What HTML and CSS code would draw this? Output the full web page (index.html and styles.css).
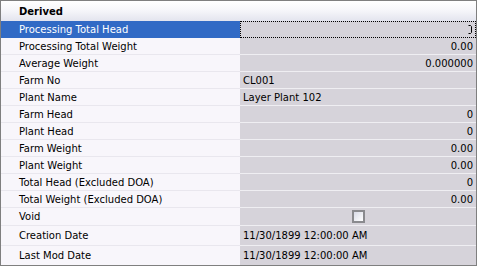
FILE: index.html
```html
<!DOCTYPE html>
<html lang="en">
<head>
<meta charset="UTF-8">
<title>Derived</title>
<link rel="stylesheet" href="styles.css">
</head>
<body>

<div class="grid">
    <div class="head">Derived</div>

    <div class="row selected">
        <div class="label">Processing Total Head</div>
        <div class="value num focus">
            <svg width="5" height="11" viewBox="0 0 5 11"><path d="M0.5 1.5 H2.5 L3.5 2.5 V8.5 L2.5 9.5 H0.5" fill="none" stroke="#000" stroke-width="1"/></svg>
        </div>
    </div>
    <div class="row"><div class="label">Processing Total Weight</div><div class="value num">0.00</div></div>
    <div class="row"><div class="label">Average Weight</div><div class="value num">0.000000</div></div>
    <div class="row"><div class="label">Farm No</div><div class="value">CL001</div></div>
    <div class="row"><div class="label">Plant Name</div><div class="value">Layer Plant 102</div></div>
    <div class="row"><div class="label">Farm Head</div><div class="value num">0</div></div>
    <div class="row"><div class="label">Plant Head</div><div class="value num">0</div></div>
    <div class="row"><div class="label">Farm Weight</div><div class="value num">0.00</div></div>
    <div class="row"><div class="label">Plant Weight</div><div class="value num">0.00</div></div>
    <div class="row"><div class="label">Total Head (Excluded DOA)</div><div class="value num">0</div></div>
    <div class="row"><div class="label">Total Weight (Excluded DOA)</div><div class="value num">0.00</div></div>
    <div class="row void"><div class="label">Void</div><div class="value check"><span class="box"></span></div></div>
    <div class="row tall"><div class="label">Creation Date</div><div class="value">11/30/1899 12:00:00 AM</div></div>
    <div class="row tall last"><div class="label">Last Mod Date</div><div class="value">11/30/1899 12:00:00 AM</div></div>
</div>

</body>
</html>
```

FILE: styles.css
```css
body {
    margin: 0;
    background: #ffffff;
    font-family: "DejaVu Sans", Verdana, sans-serif;
    font-size: 10px;
    color: #000000;
}
.grid {
    width: 477px;
    height: 266px;
    box-sizing: border-box;
    border: 1px solid #7f7f7f;
    display: flex;
    flex-direction: column;
}
.head {
    height: 20px;
    line-height: 21px;
    padding-left: 18px;
    font-weight: bold;
    background: linear-gradient(#ffffff, #f5f5f9 50%, #e3e4ee);
}
.row {
    display: flex;
    height: 17px;
}
.row.void {
    height: 18px;
}
.row.tall {
    height: 20px;
}
.row.last {
    height: 19px;
}
.label {
    width: 221px;
    padding-left: 18px;
    background: #f8f6fb;
    border-bottom: 1px solid #e9e7ee;
    display: flex;
    align-items: center;
}
.value {
    flex: 1;
    padding: 0 3px;
    background: #d6d3da;
    border-bottom: 1px solid #efeef2;
    display: flex;
    align-items: center;
}
.num {
    justify-content: flex-end;
}
.last .label, .last .value {
    border-bottom: none;
}
.selected .label {
    background: #316ac5;
    color: #ffffff;
    border-bottom: none;
}
.selected .value {
    border-bottom: none;
}
.focus {
    outline: 1px dotted #000000;
    outline-offset: -1px;
}
.check {
    justify-content: center;
}
.box {
    width: 9px;
    height: 9px;
    border: 2px solid #8a8a8e;
    background: linear-gradient(135deg, #d8dae6, #ffffff);
}
```
